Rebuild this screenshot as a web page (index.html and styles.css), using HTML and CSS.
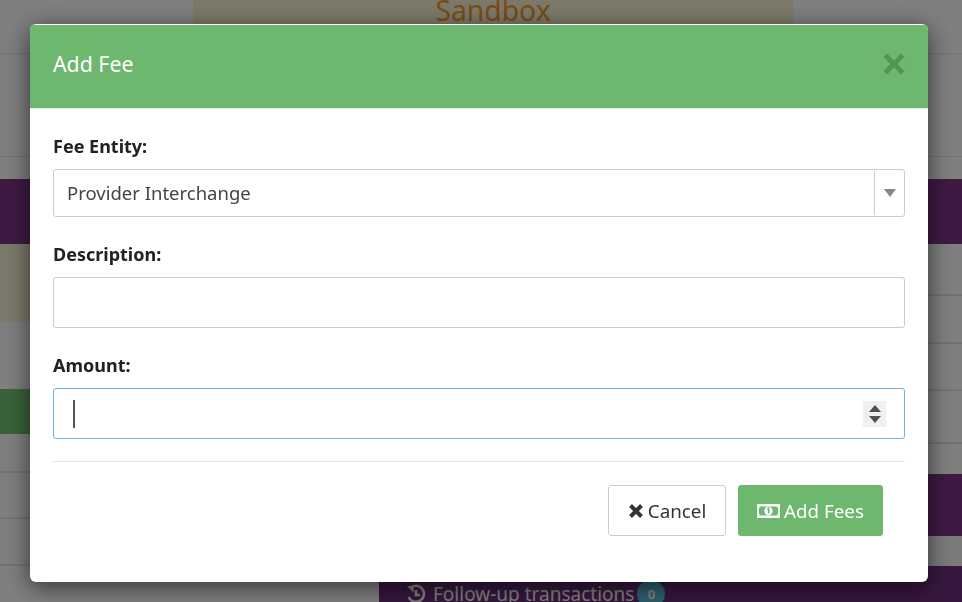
FILE: index.html
```html
<!DOCTYPE html>
<html>
<head lang="en">
    <meta charset="UTF-8">
    <title>Add Fee</title>
    <link rel="stylesheet" href="styles.css">
</head>
<body>
<div class="page">
    <div class="topbar">
        <div class="sandbox">Sandbox</div>
    </div>
    <div class="subbar"></div>
    <div class="gap"></div>
    <div class="columns">
        <div class="left">
            <div class="band-purple"></div>
            <div class="band-beige"></div>
            <div class="row row-67"></div>
            <div class="band-green"></div>
            <div class="row row-38"></div>
            <div class="row row-46"></div>
            <div class="row row-47"></div>
        </div>
        <div class="right">
            <div class="band-purple"></div>
            <div class="row row-52"></div>
            <div class="row row-48"></div>
            <div class="row row-47"></div>
            <div class="row row-53"></div>
            <div class="spacer"></div>
            <div class="band-tall"></div>
            <div class="spacer-small"></div>
            <div class="followup">
                <svg class="history" viewBox="0 0 20 20">
                    <path d="M4.2 4.2A8 8 0 1 1 2.6 13"></path>
                    <path d="M10 6v5h4"></path>
                    <path class="solid" d="M1 2h6.500v6.500z"></path>
                </svg>
                <span>Follow-up transactions</span>
                <span class="badge">0</span>
            </div>
        </div>
    </div>
</div>

<div class="backdrop"></div>

<div class="overlay">
    <div class="modal">
        <div class="modal-header">
            <h4>Add Fee</h4>
            <svg class="close" viewBox="0 0 20 20">
                <path d="M2 2l16 16M18 2L2 18"></path>
            </svg>
        </div>
        <div class="modal-body">
            <div class="field">
                <label>Fee Entity:</label>
                <div class="select">
                    <span class="select-text">Provider Interchange</span>
                    <span class="select-arrow"><i></i></span>
                </div>
            </div>
            <div class="field">
                <label>Description:</label>
                <div class="input"></div>
            </div>
            <div class="field field-last">
                <label>Amount:</label>
                <div class="input focus">
                    <span class="caret"></span>
                    <span class="spinner"><i class="up"></i><i class="down"></i></span>
                </div>
            </div>
            <div class="footer">
                <a class="btn btn-default" href="javascript:;">
                    <svg class="icon-times" viewBox="0 0 16 16">
                        <path d="M2.500 2.500l11 11M13.500 2.500l-11 11"></path>
                    </svg>
                    Cancel
                </a>
                <a class="btn btn-success" href="javascript:;">
                    <svg class="icon-money" viewBox="0 0 23 16">
                        <path fill-rule="evenodd" d="M0 1h23v14H0zM3.500 3.500L2 5v6l1.500 1.500h16L21 11V5l-1.500-1.500z"></path>
                        <circle cx="11.500" cy="8" r="4.200"></circle>
                        <path class="one" d="M10.200 6.400l1.500-1v5.200"></path>
                    </svg>
                    Add Fees
                </a>
            </div>
        </div>
    </div>
</div>
</body>
</html>
```

FILE: styles.css
```css
* {
    margin: 0;
    padding: 0;
    box-sizing: border-box;
}

html, body {
    height: 100%;
    overflow: hidden;
}

body {
    font-family: "Noto Sans", "Liberation Sans", sans-serif;
    font-size: 18px;
    color: #333;
    background-color: #fff;
}

/* page behind the dialog */
.page {
    height: 602px;
    overflow: hidden;
}

.topbar {
    height: 54px;
    border-bottom: 1px solid #e6e6e6;
    padding-left: 193px;
}

.sandbox {
    width: 600px;
    height: 53px;
    background-color: #fbf3d5;
    color: #f09a2c;
    font-size: 28.300px;
    line-height: 20px;
    text-align: center;
}

.subbar {
    height: 103px;
    border-bottom: 1px solid #e6e6e6;
}

.gap {
    height: 22px;
}

.columns {
    display: flex;
}

.left {
    width: 379px;
}

.right {
    flex: 1;
}

.band-purple {
    height: 65px;
    background-color: #7d3587;
}

.band-beige {
    height: 78px;
    background-color: #f8f5d8;
}

.band-green {
    height: 45px;
    background-color: #74c474;
}

.row {
    border-bottom: 2px solid #e6e6e6;
}

.row-67 { height: 67px; border-bottom: 0; }
.row-38 { height: 39px; }
.row-46 { height: 46px; }
.row-47 { height: 47px; }
.row-52 { height: 52px; }
.row-48 { height: 48px; }
.row-53 { height: 53px; }

.spacer {
    height: 30px;
}

.band-tall {
    height: 62px;
    background-color: #7d3587;
}

.spacer-small {
    height: 30px;
    background-color: #f5f7f5;
}

.followup {
    height: 37px;
    background-color: #6e2f7c;
    color: #fff;
    font-size: 19px;
    padding: 19px 0 0 27px;
    display: flex;
    align-items: center;
    white-space: nowrap;
}

.history {
    width: 20px;
    height: 20px;
    margin-right: 7px;
    fill: none;
    stroke: #fff;
    stroke-width: 2.500;
}

.history .solid {
    fill: #fff;
    stroke: none;
}

.badge {
    margin-left: 3px;
    width: 28px;
    height: 28px;
    border-radius: 14px;
    background-color: #5bc0de;
    font-size: 13px;
    font-weight: bold;
    text-align: center;
    line-height: 28px;
}

.backdrop {
    position: fixed;
    top: 0;
    left: 0;
    right: 0;
    bottom: 0;
    background-color: #000;
    opacity: 0.5;
}

/* dialog */
.overlay {
    position: fixed;
    top: 0;
    left: 0;
    right: 0;
    bottom: 0;
    padding-top: 24px;
}

.modal {
    width: 898px;
    height: 558px;
    margin-left: 30px;
    background-color: #fff;
    border-radius: 6px;
    box-shadow: 0 5px 24px rgba(0, 0, 0, .6);
    overflow: hidden;
}

.modal-header {
    height: 84px;
    margin-top: 1px;
    padding: 0 23px 6px;
    background-color: #6db76f;
    border-bottom: 1px solid #e5e5e5;
    display: flex;
    align-items: center;
    justify-content: space-between;
}

.modal-header h4 {
    color: #fff;
    font-size: 21.300px;
    font-weight: normal;
}

.close {
    width: 22px;
    height: 22px;
    fill: none;
    stroke: #549358;
    stroke-width: 4.500;
}

.modal-body {
    padding: 23px 23px 0;
}

.field {
    margin-bottom: 23px;
}

.field-last {
    margin-bottom: 22px;
}

.field label {
    display: block;
    height: 28px;
    margin-bottom: 9px;
    font-size: 18px;
    line-height: 28px;
    font-weight: bold;
    color: #222;
}

.select {
    height: 48px;
    border: 1px solid #ccc;
    border-radius: 3px;
    display: flex;
    align-items: center;
    justify-content: space-between;
    padding-left: 13px;
    font-size: 18.500px;
    color: #444;
}

.select-text {
    padding-bottom: 2px;
}

.select-arrow {
    width: 30px;
    height: 44px;
    border-left: 1px solid #ccc;
    display: flex;
    align-items: center;
    justify-content: center;
}

.select-arrow i {
    border-top: 8px solid #888;
    border-left: 6px solid transparent;
    border-right: 6px solid transparent;
}

.input {
    height: 51px;
    border: 1px solid #ccc;
    border-radius: 3px;
    display: flex;
    align-items: center;
    justify-content: space-between;
    padding: 0 18px 0 19px;
}

.input.focus {
    border-color: #66b3ee;
}

.caret {
    width: 2px;
    height: 28px;
    background-color: #555;
}

.spinner {
    width: 23px;
    height: 26px;
    background-color: #f0f0f0;
    display: flex;
    flex-direction: column;
    align-items: center;
    justify-content: center;
    gap: 4px;
}

.spinner i {
    border-left: 6px solid transparent;
    border-right: 6px solid transparent;
}

.spinner .up {
    border-bottom: 7px solid #505050;
}

.spinner .down {
    border-top: 7px solid #505050;
}

.footer {
    border-top: 1px solid #e5e5e5;
    padding: 23px 22px 0 0;
    display: flex;
    justify-content: flex-end;
    gap: 12px;
}

.btn {
    height: 51px;
    border: 1px solid #ccc;
    border-radius: 3px;
    text-decoration: none;
    display: flex;
    align-items: center;
    justify-content: center;
    gap: 4px;
    font-size: 18.800px;
}

.btn-default {
    width: 118px;
    color: #333;
    background-color: #fff;
}

.btn-success {
    width: 145px;
    color: #fff;
    background-color: #6db76f;
    border-color: #6db76f;
}

.icon-times {
    width: 16px;
    height: 16px;
    fill: none;
    stroke: #333;
    stroke-width: 4;
}

.icon-money {
    width: 23px;
    height: 16px;
    fill: #fff;
}

.icon-money .one {
    fill: none;
    stroke: #6db76f;
    stroke-width: 1.500;
}
```
